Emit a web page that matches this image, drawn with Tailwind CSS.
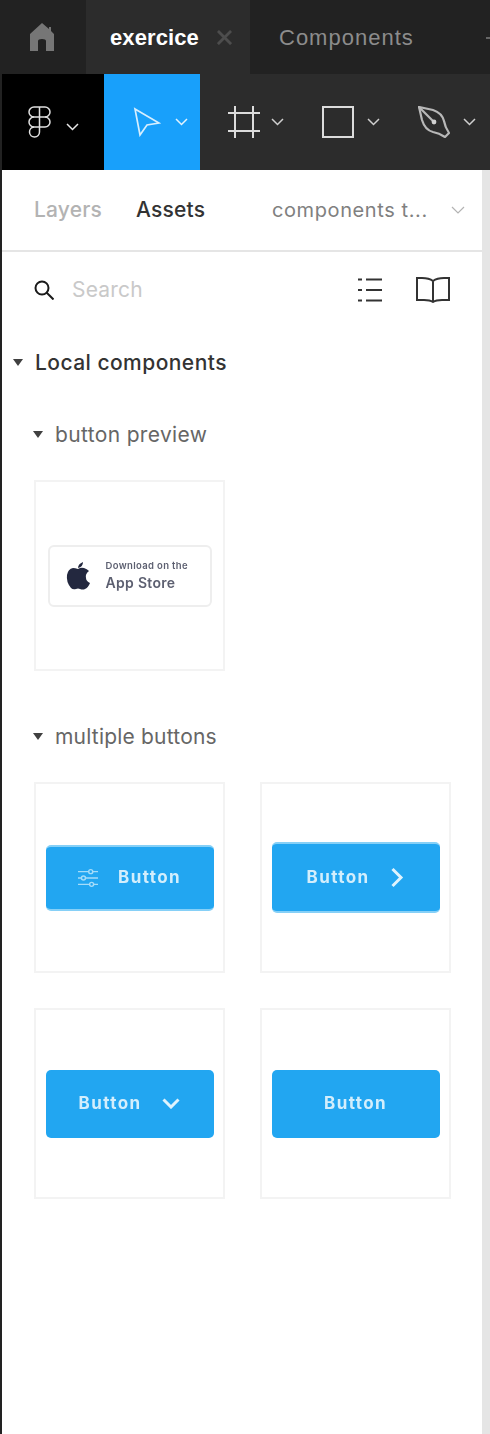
<!DOCTYPE html>
<html lang="en">
  <head>
    <meta charset="UTF-8" />
    <title>exercice - Assets</title>
    <script src="https://cdn.jsdelivr.net/npm/@tailwindcss/browser@4"></script>
  </head>
  <body class="bg-white font-['Inter',sans-serif] overflow-hidden">
    <div class="w-[490px] h-[1434px] flex flex-col overflow-hidden">
      <!-- tab bar -->
      <div class="h-[74px] flex bg-[#222222] shrink-0">
        <div class="w-[86px] flex items-center justify-center">
          <svg class="mr-[2px]" width="26" height="29" viewBox="0 0 26 29" fill="#767676"><path d="M13 0 L20 6 L20 4 L22 4 L22 8 L25 11 L25 28 L17 28 L17 18 Q17 16 13 16 Q9 16 9 18 L9 28 L1 28 L1 11 Z"/></svg>
        </div>
        <div class="w-[164px] bg-[#2c2c2c] flex items-center pl-[24px]">
          <span class="text-white text-[22px] font-bold tracking-[0.1px] leading-none font-['Liberation_Sans',sans-serif] mt-[2px]">exercice</span>
          <svg class="ml-[18px]" width="15" height="15" viewBox="0 0 16 16" stroke="#4d4d4d" stroke-width="3"><path d="M1 1 L15 15 M15 1 L1 15"/></svg>
        </div>
        <div class="flex-1 flex items-center pl-[29px] relative">
          <span class="text-[#8c8c8c] text-[22px] tracking-[1px] leading-none font-['Liberation_Sans',sans-serif] mt-[2px]">Components</span>
          <div class="absolute left-[236px] top-[37px] w-[4px] h-[2px] bg-[#666666]"></div>
        </div>
      </div>
      <!-- toolbar -->
      <div class="h-[96px] flex bg-[#2c2c2c] shrink-0">
        <div class="w-[2px] bg-[#222222]"></div>
        <div class="w-[102px] bg-black flex items-center pl-[26px]">
          <svg width="23" height="32" viewBox="0 0 23 32" fill="none" stroke="#e0e0e0" stroke-width="1.5">
            <path d="M6 1 H17 A5 5 0 0 1 17 11 H6 A5 5 0 0 1 6 1 Z"/>
            <path d="M11.5 1 V21"/>
            <path d="M6 11 A5 5 0 0 0 6 21 H17 A5 5 0 0 0 17 11"/>
            <path d="M6 21 A5 5 0 1 0 11.5 26 V21"/>
          </svg>
          <svg class="ml-[15px] mt-[10px]" width="13" height="8" viewBox="0 0 13 8" fill="none" stroke="#e8e8e8" stroke-width="1.5"><path d="M1 1 L6.5 6.5 L12 1"/></svg>
        </div>
        <div class="w-[96px] bg-[#18a0fb] flex items-center pl-[29px]">
          <svg width="28" height="30" viewBox="0 0 28 30" fill="none" stroke="#d6eefe" stroke-width="1.7"><path d="M2 2 L26 16 L14 18 L7 28 Z"/></svg>
          <svg class="ml-[14px]" width="13" height="8" viewBox="0 0 13 8" fill="none" stroke="#e3f3fe" stroke-width="1.5"><path d="M1 1 L6.5 6.5 L12 1"/></svg>
        </div>
        <div class="w-[96px] flex items-center pl-[28px]">
          <svg width="32" height="32" viewBox="0 0 32 32" fill="none" stroke="#dcdcdc" stroke-width="2"><path d="M7 0 V32 M25 0 V32 M0 7 H32 M0 25 H32"/></svg>
          <svg class="ml-[11px]" width="13" height="8" viewBox="0 0 13 8" fill="none" stroke="#cfcfcf" stroke-width="1.5"><path d="M1 1 L6.5 6.5 L12 1"/></svg>
        </div>
        <div class="w-[96px] flex items-center pl-[26px]">
          <div class="w-[32px] h-[32px] border-2 border-[#dcdcdc]"></div>
          <svg class="ml-[13px]" width="13" height="8" viewBox="0 0 13 8" fill="none" stroke="#cfcfcf" stroke-width="1.5"><path d="M1 1 L6.5 6.5 L12 1"/></svg>
        </div>
        <div class="flex-1 flex items-center pl-[26px]">
          <svg width="32" height="32" viewBox="0 0 32 32" fill="none" stroke="#b8b8b8" stroke-width="2.2"><path d="M1 1 L15 4 Q24 7 26 15 Q27 21 31 27 L27 31 Q21 27 15 26 Q7 24 4 14 Z"/><path d="M1 1 L15 15"/><circle cx="16" cy="16" r="2.4" fill="#d0d0d0" stroke="none"/></svg>
          <svg class="ml-[13px]" width="13" height="8" viewBox="0 0 13 8" fill="none" stroke="#cfcfcf" stroke-width="1.5"><path d="M1 1 L6.5 6.5 L12 1"/></svg>
        </div>
      </div>
      <!-- panel -->
      <div class="flex-1 flex">
        <div class="w-[2px] bg-[#222222]"></div>
        <div class="w-[480px] flex flex-col">
          <div class="h-[82px] flex items-center border-b-2 border-[#e5e5e5] pl-[32px] shrink-0 relative">
            <span class="w-[102px] text-[#b3b3b3] text-[21px] font-medium tracking-[0.2px]">Layers</span>
            <span class="w-[136px] text-[#333333] text-[21px] font-medium tracking-[0.2px]">Assets</span>
            <span class="w-[179px] text-[#808080] text-[20px] tracking-[0.6px] whitespace-nowrap">components t...</span>
            <svg width="14" height="8" viewBox="0 0 14 8" fill="none" stroke="#b3b3b3" stroke-width="1.2"><path d="M1 1 L7 7 L13 1"/></svg>
          </div>
          <div class="h-[76px] flex items-center pl-[32px] shrink-0">
            <svg width="20" height="20" viewBox="0 0 20 20" fill="none" stroke="#1a1a1a" stroke-width="2"><circle cx="8" cy="8" r="6.5"/><path d="M12.5 12.5 L19.5 19.5"/></svg>
            <span class="w-[304px] pl-[18px] text-[#c9c9c9] text-[21px] tracking-[0.2px] shrink-0">Search</span>
            <svg width="24" height="24" viewBox="0 0 24 24" stroke="#333333" stroke-width="2"><path d="M0 1.5 H4 M8 1.5 H24 M0 12 H4 M8 12 H24 M0 22.5 H4 M8 22.5 H24"/></svg>
            <svg class="ml-[34px]" width="34" height="26" viewBox="0 0 34 26" fill="none" stroke="#333333" stroke-width="2"><path d="M17 24 V4 Q13 1 6 1 H1 V23 H8 Q14 23 17 25 Q20 23 26 23 H33 V1 H28 Q21 1 17 4"/></svg>
          </div>
          <!-- local components -->
          <div class="h-[20px] mt-[24px] flex items-center pl-[11px] shrink-0">
            <div class="w-0 h-0 border-l-[5px] border-r-[5px] border-t-[7px] border-l-transparent border-r-transparent border-t-[#404040]"></div>
            <span class="ml-[12px] text-[#333333] text-[21px] font-medium tracking-[0.45px] leading-none">Local components</span>
          </div>
          <div class="h-[20px] mt-[52px] flex items-center pl-[31px] shrink-0">
            <div class="w-0 h-0 border-l-[5px] border-r-[5px] border-t-[7px] border-l-transparent border-r-transparent border-t-[#404040]"></div>
            <span class="ml-[12px] text-[#666666] text-[21px] tracking-[0.35px] leading-none">button preview</span>
          </div>
          <div class="mt-[36px] ml-[32px] w-[191px] h-[191px] border-2 border-[#f3f3f3] flex items-center justify-center shrink-0">
            <div class="w-[164px] h-[62px] rounded-[6px] border-2 border-[#eeeeee] bg-white flex items-center pl-[16px] blur-[0.5px]">
              <svg width="24" height="28" viewBox="0 0 24 28" fill="#23283f"><path d="M12 7 Q15 5 18 6 Q21 7 23 9 Q19 12 20 16 Q20 19 24 21 Q22 26 19 27 Q17 28 14 27 Q12 26 10 27 Q7 28 5 26 Q0 20 1 13 Q2 7 7 6 Q9 6 12 7 Z M12 6 Q12 2 17 0 Q17 5 12 6 Z"/></svg>
              <div class="ml-[16px] flex flex-col whitespace-nowrap">
                <span class="text-[#5c5f70] text-[9.5px] font-semibold tracking-[0.35px] leading-[10px]">Download on the</span>
                <span class="mt-[4px] text-[#5c5f70] text-[14px] font-semibold tracking-[0.3px] leading-[16px]">App Store</span>
              </div>
            </div>
          </div>
          <div class="h-[20px] mt-[55px] flex items-center pl-[31px] shrink-0">
            <div class="w-0 h-0 border-l-[5px] border-r-[5px] border-t-[7px] border-l-transparent border-r-transparent border-t-[#404040]"></div>
            <span class="ml-[12px] text-[#666666] text-[21px] tracking-[0.2px] leading-none">multiple buttons</span>
          </div>
          <div class="mt-[36px] ml-[32px] grid grid-cols-[191px_191px] gap-x-[35px] gap-y-[35px]">
            <div class="h-[191px] border-2 border-[#f3f3f3] flex items-center justify-center">
              <div class="w-[168px] h-[66px] rounded-[5px] bg-[#22a6f1] border-y-2 border-[#86d0f7] flex items-center justify-center gap-[20px] text-[#d3eefc] text-[17px] font-bold tracking-[1.4px] blur-[0.4px]">
                <svg width="20" height="20" viewBox="0 0 22 20" fill="none" stroke="#a5dcf9" stroke-width="1.6"><path d="M0 3 H22 M0 10 H22 M0 17 H22"/><circle cx="14" cy="3" r="2.2" fill="#22a6f1"/><circle cx="6" cy="10" r="2.2" fill="#22a6f1"/><circle cx="15" cy="17" r="2.2" fill="#22a6f1"/></svg>
                <span>Button</span>
              </div>
            </div>
            <div class="h-[191px] border-2 border-[#f3f3f3] flex items-center justify-center">
              <div class="w-[168px] h-[71px] rounded-[5px] bg-[#22a6f1] border-y-2 border-[#86d0f7] flex items-center justify-center gap-[21px] text-[#d3eefc] text-[17px] font-bold tracking-[1.4px] blur-[0.4px]">
                <span>Button</span>
                <svg width="14" height="21" viewBox="0 0 13 21" fill="none" stroke="#dff3fd" stroke-width="3"><path d="M2 2 L10.5 10.5 L2 19"/></svg>
              </div>
            </div>
            <div class="h-[191px] border-2 border-[#f3f3f3] flex items-center justify-center">
              <div class="w-[168px] h-[68px] rounded-[5px] bg-[#22a6f1] flex items-center justify-center gap-[21px] text-[#d3eefc] text-[17px] font-bold tracking-[1.4px] blur-[0.4px]">
                <span>Button</span>
                <svg width="18" height="11" viewBox="0 0 18 11" fill="none" stroke="#dff3fd" stroke-width="3"><path d="M1.5 1.5 L9 9 L16.5 1.5"/></svg>
              </div>
            </div>
            <div class="h-[191px] border-2 border-[#f3f3f3] flex items-center justify-center">
              <div class="w-[168px] h-[68px] rounded-[5px] bg-[#22a6f1] flex items-center justify-center text-[#d3eefc] text-[17px] font-bold tracking-[1.4px] blur-[0.4px]">
                <span>Button</span>
              </div>
            </div>
          </div>
        </div>
        <div class="w-[8px] bg-[#e5e5e5]"></div>
      </div>
    </div>
  </body>
</html>
